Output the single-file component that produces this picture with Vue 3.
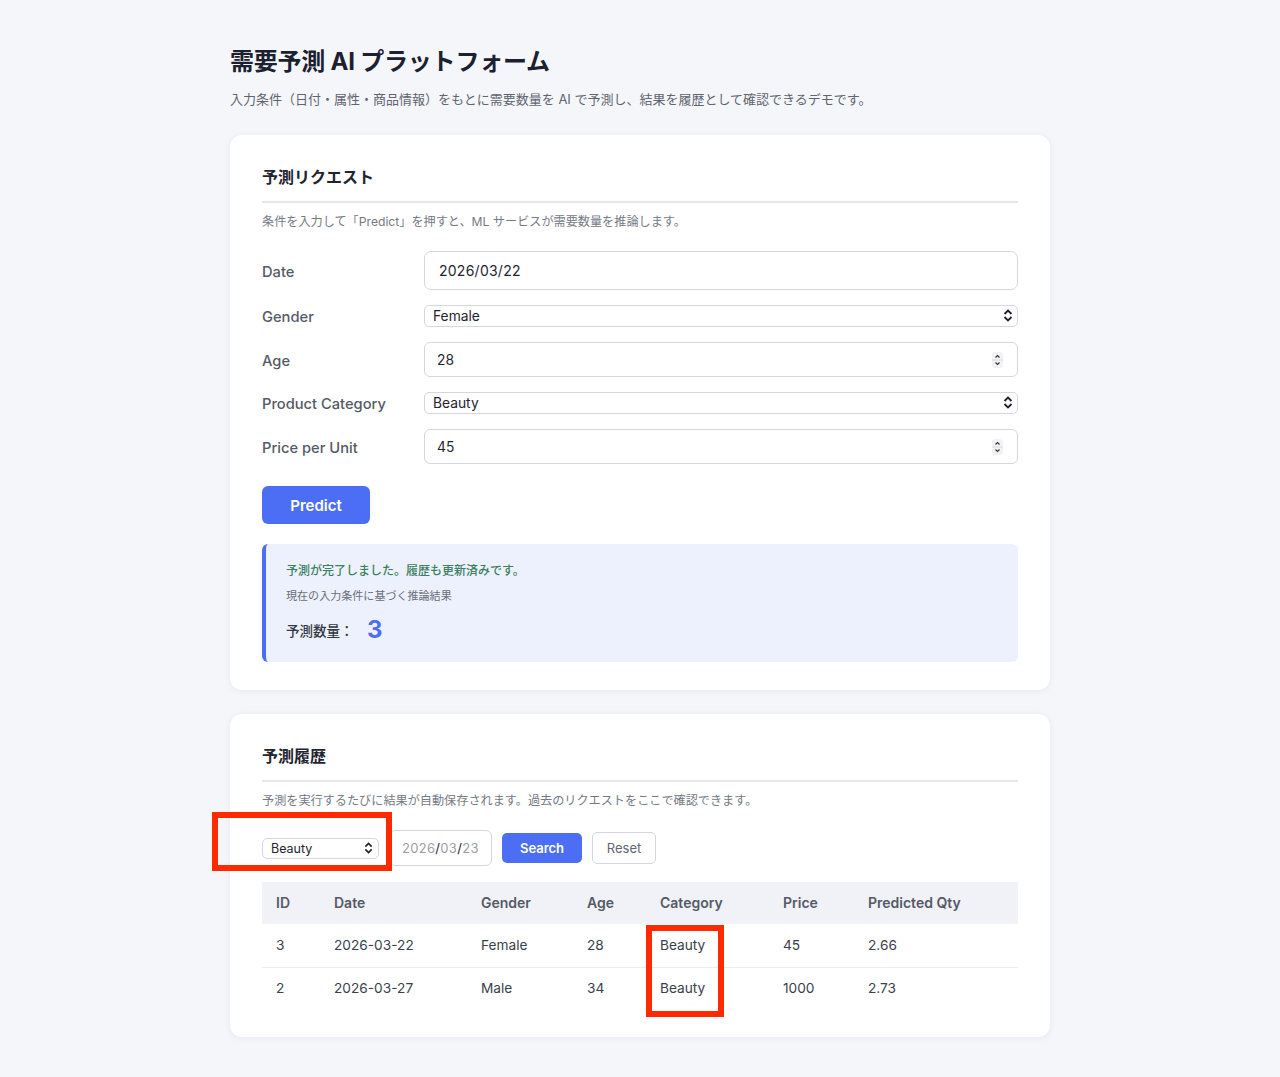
<template>
    <div class="page">
        <h1 class="title">需要予測 AI プラットフォーム</h1>
        <p class="lead">入力条件（日付・属性・商品情報）をもとに需要数量を AI で予測し、結果を履歴として確認できるデモです。</p>

        <section class="card first">
            <h2>予測リクエスト</h2>
            <p class="desc">条件を入力して「Predict」を押すと、ML サービスが需要数量を推論します。</p>

            <form class="form" @submit.prevent>
                <label>Date</label>
                <input class="field date" v-model="form.date" />

                <label>Gender</label>
                <div class="select-wrap">
                    <select class="select" v-model="form.gender">
                        <option>Female</option>
                        <option>Male</option>
                    </select>
                    <svg class="chevrons" width="10" height="13" viewBox="0 0 10 13">
                        <path d="M1.5 5L5 1.5L8.5 5M1.5 8L5 11.5L8.5 8" />
                    </svg>
                </div>

                <label>Age</label>
                <div class="number-wrap">
                    <input class="field number" v-model="form.age" />
                    <svg class="spinner" width="11" height="16" viewBox="0 0 11 16">
                        <rect width="11" height="16" rx="3" fill="#f2f2f5" />
                        <path class="spin-line" d="M0 8H11" />
                        <path class="spin-arrow" d="M3.5 5.5L5.5 3.5L7.5 5.5M3.5 10.5L5.5 12.5L7.5 10.5" />
                    </svg>
                </div>

                <label>Product Category</label>
                <div class="select-wrap">
                    <select class="select" v-model="form.category">
                        <option>Beauty</option>
                        <option>Clothing</option>
                        <option>Electronics</option>
                    </select>
                    <svg class="chevrons" width="10" height="13" viewBox="0 0 10 13">
                        <path d="M1.5 5L5 1.5L8.5 5M1.5 8L5 11.5L8.5 8" />
                    </svg>
                </div>

                <label>Price per Unit</label>
                <div class="number-wrap">
                    <input class="field number" v-model="form.price" />
                    <svg class="spinner" width="11" height="16" viewBox="0 0 11 16">
                        <rect width="11" height="16" rx="3" fill="#f2f2f5" />
                        <path class="spin-line" d="M0 8H11" />
                        <path class="spin-arrow" d="M3.5 5.5L5.5 3.5L7.5 5.5M3.5 10.5L5.5 12.5L7.5 10.5" />
                    </svg>
                </div>
            </form>

            <button class="predict" type="button">Predict</button>

            <div class="result">
                <p class="ok">予測が完了しました。履歴も更新済みです。</p>
                <p class="note">現在の入力条件に基づく推論結果</p>
                <p class="qty">予測数量： <strong>3</strong></p>
            </div>
        </section>

        <section class="card">
            <h2>予測履歴</h2>
            <p class="desc">予測を実行するたびに結果が自動保存されます。過去のリクエストをここで確認できます。</p>

            <div class="filters">
                <div class="select-wrap small">
                    <select class="select" v-model="filterCategory">
                        <option>Beauty</option>
                        <option>Clothing</option>
                    </select>
                    <svg class="chevrons" width="9" height="12" viewBox="0 0 10 13">
                        <path d="M1.5 5L5 1.5L8.5 5M1.5 8L5 11.5L8.5 8" />
                    </svg>
                </div>
                <div class="filter-date">
                    <span>2026</span><b>/</b><span>03</span><b>/</b><span>23</span>
                </div>
                <button class="search" type="button">Search</button>
                <button class="reset" type="button">Reset</button>
                <div class="mark mark-filter"></div>
            </div>

            <div class="table-wrap">
                <table>
                    <colgroup>
                        <col v-for="w in colWidths" :key="w.key" :style="{ width: w.width + 'px' }" />
                    </colgroup>
                    <thead>
                        <tr>
                            <th>ID</th>
                            <th>Date</th>
                            <th>Gender</th>
                            <th>Age</th>
                            <th>Category</th>
                            <th>Price</th>
                            <th>Predicted Qty</th>
                        </tr>
                    </thead>
                    <tbody>
                        <tr v-for="row in history" :key="row.id">
                            <td>{{ row.id }}</td>
                            <td>{{ row.date }}</td>
                            <td>{{ row.gender }}</td>
                            <td>{{ row.age }}</td>
                            <td>{{ row.category }}</td>
                            <td>{{ row.price }}</td>
                            <td>{{ row.qty }}</td>
                        </tr>
                    </tbody>
                </table>
                <div class="mark mark-column"></div>
            </div>
        </section>
    </div>
</template>

<script setup>
import { reactive, ref } from "vue";

const form = reactive({
    date: "2026/03/22",
    gender: "Female",
    age: "28",
    category: "Beauty",
    price: "45",
});

const filterCategory = ref("Beauty");

const colWidths = [
    { key: "id", width: 58 },
    { key: "date", width: 147 },
    { key: "gender", width: 106 },
    { key: "age", width: 73 },
    { key: "category", width: 123 },
    { key: "price", width: 85 },
    { key: "qty", width: 164 },
];

const history = [
    { id: 3, date: "2026-03-22", gender: "Female", age: 28, category: "Beauty", price: 45, qty: "2.66" },
    { id: 2, date: "2026-03-27", gender: "Male", age: 34, category: "Beauty", price: 1000, qty: "2.73" },
];
</script>

<style>
html,
body {
    margin: 0;
    background: #f5f6fa;
}
</style>

<style scoped>
.page {
    box-sizing: border-box;
    width: 820px;
    height: 1077px;
    margin: 0 auto;
    padding-top: 45px;
    font-family: Inter, "Noto Sans CJK JP", sans-serif;
    color: #1f2430;
}

.title {
    margin: 0;
    font-size: 24px;
    line-height: 34px;
    font-weight: 700;
    letter-spacing: -0.22px;
    color: #1c2130;
}

.lead {
    margin: 11px 0 0;
    font-size: 13px;
    line-height: 18px;
    color: #5f6470;
}

.card {
    box-sizing: border-box;
    padding: 28px 32px;
    background: #fff;
    border-radius: 12px;
    box-shadow: 0 1px 6px rgba(30, 40, 70, 0.06);
}

.first {
    margin-top: 27px;
    margin-bottom: 24px;
}

h2 {
    margin: 0;
    padding-top: 2px;
    padding-bottom: 12px;
    border-bottom: 2px solid #e6e7ec;
    font-size: 16px;
    line-height: 24px;
    font-weight: 600;
    color: #1f2430;
}

.desc {
    margin: 10px 0 0;
    font-size: 12.15px;
    line-height: 18px;
    color: #757a85;
}

.form {
    display: grid;
    grid-template-columns: 162px 1fr;
    row-gap: 15px;
    align-items: center;
    margin-top: 20px;
}

label {
    padding-top: 2px;
    font-size: 14.7px;
    font-weight: 500;
    color: #555a66;
}

.field {
    box-sizing: border-box;
    display: block;
    width: 100%;
    margin: 0;
    border: 1px solid #d5d7e0;
    background: #fff;
    font-family: inherit;
    color: #1f2430;
    outline: none;
}

.date {
    height: 39px;
    padding: 0 14px;
    border-radius: 7px;
    font-size: 14px;
    letter-spacing: 0.25px;
}

.number {
    height: 35px;
    padding: 0 12px;
    border-radius: 6px;
    font-size: 13.8px;
}

.number-wrap,
.select-wrap {
    position: relative;
}

.select {
    appearance: none;
    box-sizing: border-box;
    display: block;
    width: 100%;
    height: 22px;
    margin: 0;
    padding: 0 8px 1px;
    border: 1px solid #d5d7e0;
    border-radius: 5px;
    background: #fff;
    font-family: inherit;
    font-size: 13.8px;
    color: #1f2430;
    outline: none;
}

.chevrons {
    position: absolute;
    top: 4px;
    right: 5.5px;
    fill: none;
    stroke: #1c2130;
    stroke-width: 1.8;
    pointer-events: none;
}

.spinner {
    position: absolute;
    top: 10px;
    right: 15px;
    pointer-events: none;
}

.spin-line {
    stroke: #dcdce2;
    stroke-width: 1;
}

.spin-arrow {
    fill: none;
    stroke: #333;
    stroke-width: 1.1;
}

.predict {
    display: block;
    width: 108px;
    height: 38px;
    margin-top: 22px;
    padding: 0;
    border: 0;
    border-radius: 6px;
    background: #4c6ef5;
    font-family: inherit;
    font-size: 15px;
    font-weight: 600;
    color: #fff;
}

.result {
    box-sizing: border-box;
    height: 118px;
    margin-top: 20px;
    padding: 18px 20px;
    border-left: 4px solid #4c6ef5;
    border-radius: 6px;
    background: #edf1fd;
}

.result p {
    margin: 0;
}

.ok {
    font-size: 12px;
    line-height: 18px;
    font-weight: 500;
    color: #3a8060;
}

.note {
    padding-top: 7px;
    font-size: 11.05px;
    line-height: 18px;
    color: #6a6e78;
}

.qty {
    display: flex;
    align-items: center;
    margin-top: 11px !important;
    font-size: 13.5px;
    line-height: 30px;
    font-weight: 500;
    color: #333844;
    white-space: pre;
}

.qty strong {
    margin-left: 10px;
    margin-top: -2px;
    font-size: 24px;
    font-weight: 700;
    color: #4c6ef5;
}

.filters {
    position: relative;
    display: flex;
    align-items: center;
    gap: 10px;
    margin-top: 20px;
}

.small {
    flex: 0 0 117px;
}

.small .select {
    height: 21px;
    padding-bottom: 0;
    font-size: 12.5px;
}

.small .chevrons {
    right: 6px;
    top: 4px;
}

.filter-date {
    box-sizing: border-box;
    display: flex;
    align-items: center;
    width: 103px;
    height: 36px;
    padding-left: 12px;
    border: 1px solid #d5d7e0;
    border-radius: 6px;
    font-size: 13px;
    letter-spacing: 0.3px;
}

.filter-date span {
    color: #9a9da6;
}

.filter-date b {
    font-weight: 400;
    color: #1f2430;
}

.search {
    width: 80px;
    height: 30px;
    padding: 0;
    border: 0;
    border-radius: 5px;
    background: #4c6ef5;
    font-family: inherit;
    font-size: 13px;
    font-weight: 600;
    color: #fff;
}

.reset {
    width: 64px;
    height: 32px;
    padding: 0;
    border: 1px solid #d5d7e0;
    border-radius: 5px;
    background: #fff;
    font-family: inherit;
    font-size: 13px;
    color: #5f6470;
}

.table-wrap {
    position: relative;
    margin-top: 16px;
}

table {
    width: 756px;
    table-layout: fixed;
    border-collapse: collapse;
    font-size: 14px;
}

th {
    box-sizing: border-box;
    height: 42px;
    padding: 0 14px 2px;
    background: #f1f2f7;
    text-align: left;
    font-weight: 600;
    color: #555a66;
}

td {
    box-sizing: border-box;
    height: 43px;
    padding: 0 14px 1px;
    border-bottom: 1px solid #ecedf1;
    font-size: 13.7px;
    color: #3a3f4b;
}

tbody tr:last-child td {
    height: 42px;
    border-bottom: 0;
}

/* 赤枠の注釈 */
.mark {
    position: absolute;
    box-sizing: border-box;
    border: 6px solid #ff2a00;
}

.mark-filter {
    left: -50px;
    top: -18px;
    width: 180px;
    height: 59px;
}

.mark-column {
    left: 384px;
    top: 43px;
    width: 78px;
    height: 92px;
}
</style>
